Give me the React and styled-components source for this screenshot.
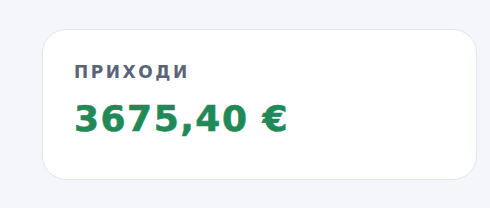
import React from 'react';
import styled, { createGlobalStyle } from 'styled-components';

const GlobalStyle = createGlobalStyle`
	html, body {
		margin: 0;
		padding: 0;
		background: #f4f6fa;
		font-family: "DejaVu Sans", "Liberation Sans", sans-serif;
	}
`;

const Page = styled.div`
	padding: 29px 13px 0 42px;
`;

const Card = styled.div`
	box-sizing: border-box;
	height: 151px;
	background: #fff;
	border: 1.5px solid #e1e5ee;
	border-radius: 24px;
	padding: 32px 31px;
	display: flex;
	flex-direction: column;
	gap: 16px;
`;

const Label = styled.div`
	font-size: 17px;
	font-weight: 700;
	letter-spacing: 0.15em;
	color: #5b6477;
	text-transform: uppercase;
	line-height: 20px;
`;

const Amount = styled.div`
	font-size: 36px;
	font-weight: 700;
	letter-spacing: 1.5px;
	-webkit-text-stroke: 0.6px ${props => props.color};
	color: ${props => props.color};
	line-height: 42px;
`;

function StatCard({label, value, color}) {
	return (
		<Card>
			<Label>{label}</Label>
			<Amount color={color}>{value}</Amount>
		</Card>
	)
}

export default function App() {
	return (
		<>
			<GlobalStyle />
			<Page>
				<StatCard label="Приходи" value="3675,40 €" color="#1f8a57" />
			</Page>
		</>
	)
}
